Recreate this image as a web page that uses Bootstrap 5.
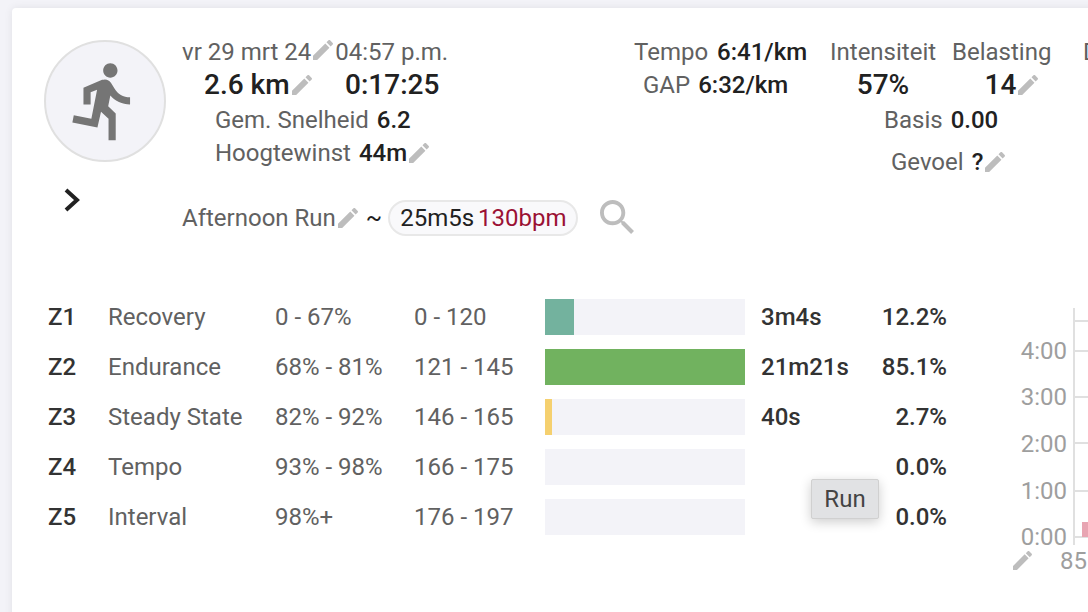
<!DOCTYPE html>
<html lang="nl">
<head>
<meta charset="utf-8">
<title>Afternoon Run</title>
<link href="https://cdn.jsdelivr.net/npm/bootstrap@5.3.0/dist/css/bootstrap.min.css" rel="stylesheet">
<style>
html,body{height:612px;overflow:hidden}
body{background:#f3f3f8;font-family:Roboto,"Liberation Sans",sans-serif;font-size:24px;line-height:1.2;color:#616161;padding:8px 0 0 12px}
.sheet{width:1200px;height:640px;background:#fff;border-radius:4px;box-shadow:0 0 8px rgba(0,0,0,.08);padding:32px 0 0 32px}
.avatar-col{width:138px;flex:none}
.avatar{width:122px;height:122px;border-radius:50%;background:#f3f3f8;border:2px solid #e0e0e0}
.avatar svg{width:86px;height:86px;fill:#757575}
.chev{display:block;width:16px;height:24px;margin:26px 0 0 20px;fill:none;stroke:#212121;stroke-width:4}
.pen{width:20px;height:20px;fill:#bdbdbd;flex:none;margin:0 2px}
.val{color:#212121;font-weight:500}
.big{font-size:28px}
.info-a{width:452px;flex:none}
.r1{height:26px;line-height:24px}
.r2{height:38px;padding-left:22px}
.km{width:141px}
.r3{height:32px;padding-left:33px}
.r4{height:34px;padding-left:33px}
.info-b{width:196px;flex:none}
.tem{height:26px;line-height:24px}
.tem span:first-child{margin-right:9px}
.gap-row{height:38px;padding-left:9px}
.info-c{width:300px;flex:none}
.int-col{width:106px;text-align:center}
.bel-col{width:99px;margin-left:16px;text-align:center}
.belval{height:38px;padding-left:22px}
.bigrow{height:38px}
.dur{margin-left:32px;line-height:24px}
.basis{height:32px;margin-left:54px}
.gevoel{height:34px;margin:9px 0 0 61px}
.tilde{margin:0 6px;color:#212121}
.pill{border:2px solid #e8e8e8;background:#f9f9fb;border-radius:18px;height:36px;width:190px;padding:0 10px;color:#212121}
.bpm{color:#9b1134;margin-left:4px}
.title-row{margin-top:21px;height:36px}
.srch{width:34px;height:34px;margin:0 0 3px 22px;fill:#bdbdbd}
.zones{margin:63px 0 0 4px;width:1040px;position:relative}
.zrow{display:grid;grid-template-columns:60px 167px 139px 131px 200px 120px 82px;height:36px;margin-bottom:14px;align-items:center}
.zid{color:#333;font-weight:500}
.zbar{background:#f3f3f8;height:36px}
.zfill{height:36px}
.ztime,.zpc{color:#333;font-weight:500}
.ztime{padding-left:16px}
.zpc{text-align:right}
.tip{position:absolute;left:763px;top:180px;width:68px;height:40px;background:#e1e2e4;border:1px solid #d0d0d0;border-radius:2px;box-shadow:0 3px 12px rgba(0,0,0,.2);color:#444;display:flex;align-items:center;justify-content:center}
.chart{position:absolute;left:966px;top:9px;width:80px;height:270px;overflow:visible}
.chart text{font-family:Roboto,sans-serif;font-size:24px;fill:#9e9e9e}
</style>
</head>
<body>
<svg width="0" height="0" class="position-absolute"><defs>
<symbol id="edit" viewBox="3 3 18 18"><path d="M3 17.25V21h3.75L17.81 9.94l-3.75-3.75L3 17.25zM20.71 7.04c.39-.39.39-1.02 0-1.41l-2.34-2.34c-.39-.39-1.02-.39-1.41 0l-1.83 1.83 3.75 3.75 1.83-1.83z"/></symbol>
</defs></svg>
<div class="sheet">
  <div class="d-flex">
    <div class="avatar-col">
      <div class="avatar d-flex align-items-center justify-content-center">
        <svg viewBox="0 0 24 24"><path d="M13.49 5.48c1.1 0 2-.9 2-2s-.9-2-2-2-2 .9-2 2 .9 2 2 2zm-3.6 13.9l1-4.4 2.1 2v6h2v-7.5l-2.1-2 .6-3c1.3 1.5 3.3 2.5 5.5 2.5v-2c-1.9 0-3.5-1-4.3-2.4l-1-1.6c-.4-.6-1-1-1.7-1-.3 0-.5.1-.8.1l-5.2 2.2v4.7h2v-3.4l1.8-.7-1.6 8.1-4.9-1-.4 2 7 1.4z"/></svg>
      </div>
      <svg class="chev" viewBox="0 0 16 24"><path d="M2 2 13 12 2 22"/></svg>
    </div>
    <div>
      <div class="d-flex">
        <div class="info-a">
          <div class="r1 d-flex align-items-start">vr 29 mrt 24<svg class="pen"><use href="#edit"/></svg>04:57 p.m.</div>
          <div class="r2 d-flex align-items-center"><div class="km d-flex align-items-center val big">2.6 km<svg class="pen"><use href="#edit"/></svg></div><div class="big val">0:17:25</div></div>
          <div class="r3 d-flex align-items-center"><span class="me-2">Gem. Snelheid</span><span class="val">6.2</span></div>
          <div class="r4 d-flex align-items-center"><span class="me-2">Hoogtewinst</span><span class="val">44m</span><svg class="pen"><use href="#edit"/></svg></div>
        </div>
        <div class="info-b">
          <div class="tem d-flex align-items-start"><span>Tempo</span><span class="val">6:41/km</span></div>
          <div class="gap-row d-flex align-items-center"><span class="me-2">GAP</span><span class="val">6:32/km</span></div>
        </div>
        <div class="info-c">
          <div class="d-flex">
            <div class="int-col"><div class="r1">Intensiteit</div><div class="val big bigrow d-flex align-items-center justify-content-center">57%</div></div>
            <div class="bel-col"><div class="r1">Belasting</div><div class="belval d-flex align-items-center justify-content-center"><span class="val big">14</span><svg class="pen"><use href="#edit"/></svg></div></div>
            <div class="dur">Duur</div>
          </div>
          <div class="basis d-flex align-items-center"><span class="me-2">Basis</span><span class="val">0.00</span></div>
          <div class="gevoel d-flex align-items-center"><span class="me-2">Gevoel</span><span class="val">?</span><svg class="pen"><use href="#edit"/></svg></div>
        </div>
      </div>
      <div class="title-row d-flex align-items-center">Afternoon Run<svg class="pen"><use href="#edit"/></svg><span class="tilde">~</span>
        <span class="pill d-flex align-items-center">25m5s<span class="bpm">130bpm</span></span>
        <svg class="srch" viewBox="3 3 17.5 17.5"><path d="M15.5 14h-.79l-.28-.27C15.41 12.59 16 11.11 16 9.5 16 5.91 13.09 3 9.5 3S3 5.91 3 9.5 5.91 16 9.5 16c1.61 0 3.09-.59 4.23-1.57l.27.28v.79l5 4.99L20.49 19l-4.99-5zm-6 0C7.01 14 5 11.99 5 9.5S7.01 5 9.5 5 14 7.01 14 9.5 11.99 14 9.5 14z"/></svg>
      </div>
    </div>
  </div>

  <div class="zones">
    <div class="zrow"><span class="zid">Z1</span><span>Recovery</span><span>0 - 67%</span><span>0 - 120</span><div class="zbar"><div class="zfill" style="width:14.5%;background:#73b29e"></div></div><span class="ztime">3m4s</span><span class="zpc">12.2%</span></div>
    <div class="zrow"><span class="zid">Z2</span><span>Endurance</span><span>68% - 81%</span><span>121 - 145</span><div class="zbar"><div class="zfill" style="width:100%;background:#71b25f"></div></div><span class="ztime">21m21s</span><span class="zpc">85.1%</span></div>
    <div class="zrow"><span class="zid">Z3</span><span>Steady State</span><span>82% - 92%</span><span>146 - 165</span><div class="zbar"><div class="zfill" style="width:3.5%;background:#f5d06f"></div></div><span class="ztime">40s</span><span class="zpc">2.7%</span></div>
    <div class="zrow"><span class="zid">Z4</span><span>Tempo</span><span>93% - 98%</span><span>166 - 175</span><div class="zbar"></div><span class="ztime"></span><span class="zpc">0.0%</span></div>
    <div class="zrow"><span class="zid">Z5</span><span>Interval</span><span>98%+</span><span>176 - 197</span><div class="zbar"></div><span class="ztime"></span><span class="zpc">0.0%</span></div>
    <div class="tip">Run</div>
    <svg class="chart" viewBox="0 0 80 270">
      <g stroke="#e0e0e0" stroke-width="2">
        <path d="M60 0V237"/>
        <path d="M60 13H80M60 43H80M60 89H80M60 135H80M60 183H80M60 229H80"/>
      </g>
      <rect x="68" y="214" width="12" height="15" fill="#e8a5b2"/>
      <g text-anchor="end">
        <text x="53" y="51">4:00</text><text x="53" y="97">3:00</text><text x="53" y="144">2:00</text><text x="53" y="191">1:00</text><text x="53" y="237">0:00</text>
      </g>
      <text x="46" y="261">85</text>
      <use href="#edit" x="-1" y="243" width="19" height="19" fill="#bdbdbd"/>
    </svg>
  </div>
</div>
<script src="https://cdn.jsdelivr.net/npm/bootstrap@5.3.0/dist/js/bootstrap.bundle.min.js"></script>
</body>
</html>
